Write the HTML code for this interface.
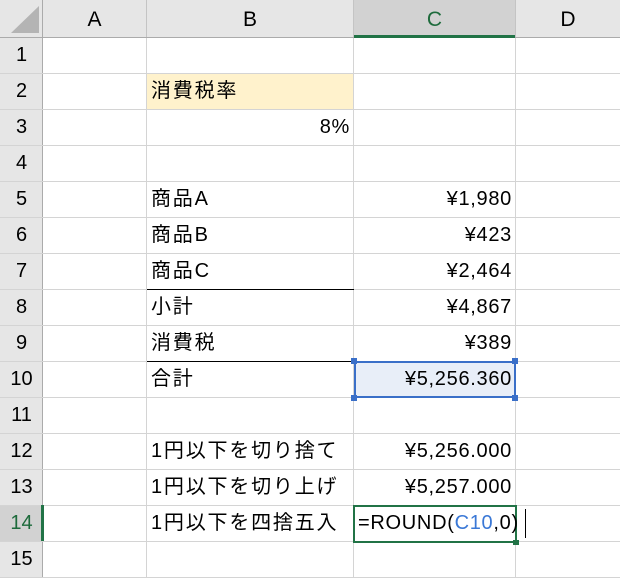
<!DOCTYPE html>
<html><head><meta charset="utf-8"><style>
*{margin:0;padding:0;box-sizing:border-box}
body{width:620px;height:578px;overflow:hidden;background:#fff;position:relative;font-family:"Liberation Sans","Noto Sans CJK JP",sans-serif;font-size:20px;color:#000}
.a{position:absolute}
.h{background:#e6e6e6}
.vl{position:absolute;top:0;width:1px;height:578px;background:#d4d4d4}
.hl{position:absolute;left:0;height:1px;width:620px;background:#d4d4d4}
.c{position:absolute;height:36px;line-height:37px;white-space:nowrap;letter-spacing:0.7px}
.j{letter-spacing:1.8px}
.r{text-align:right}
.rh{position:absolute;left:0;width:43px;height:36px;line-height:37px;text-align:center;font-size:20px}
.ch{position:absolute;top:0;height:37px;line-height:39px;text-align:center;font-size:21px}
</style></head><body>
<div class="a h" style="left:0;top:0;width:620px;height:37px"></div>
<div class="a h" style="left:0;top:0;width:43px;height:578px"></div>
<div class="a" style="left:354px;top:0;width:161px;height:37px;background:#d2d2d2"></div>
<div class="a" style="left:0;top:505px;width:43px;height:36px;background:#d2d2d2"></div>
<div class="a" style="left:147px;top:74px;width:207px;height:35px;background:#fff2cc"></div>
<div class="a" style="left:354px;top:361px;width:162px;height:36px;background:#e8eef8"></div>
<div class="vl" style="left:42px;background:#ababab"></div>
<div class="vl" style="left:146px"></div>
<div class="vl" style="left:353px"></div>
<div class="vl" style="left:515px"></div>
<div class="a" style="left:146px;top:0;width:1px;height:37px;background:#c4c4c4"></div>
<div class="a" style="left:353px;top:0;width:1px;height:37px;background:#c4c4c4"></div>
<div class="a" style="left:515px;top:0;width:1px;height:37px;background:#c4c4c4"></div>
<div class="hl" style="top:73px"></div><div class="hl" style="top:109px"></div><div class="hl" style="top:145px"></div>
<div class="hl" style="top:181px"></div><div class="hl" style="top:217px"></div><div class="hl" style="top:253px"></div>
<div class="hl" style="top:289px"></div><div class="hl" style="top:325px"></div><div class="hl" style="top:361px"></div>
<div class="hl" style="top:397px"></div><div class="hl" style="top:433px"></div><div class="hl" style="top:469px"></div>
<div class="hl" style="top:505px"></div><div class="hl" style="top:541px"></div><div class="hl" style="top:577px"></div>
<div class="a" style="left:0;top:37px;width:620px;height:1px;background:#ababab"></div>
<div class="a" style="left:354px;top:35px;width:161px;height:3px;background:#217346"></div>
<div class="a" style="left:41px;top:505px;width:3px;height:36px;background:#217346"></div>
<div class="a" style="left:147px;top:289px;width:207px;height:1px;background:#000"></div>
<div class="a" style="left:147px;top:361px;width:207px;height:1px;background:#000"></div>
<svg class="a" style="left:10px;top:6px" width="30" height="28"><polygon points="29,0 29,27 1,27" fill="#b4b4b4"/></svg>
<div class="ch" style="left:43px;width:103px">A</div>
<div class="ch" style="left:147px;width:206px">B</div>
<div class="ch" style="left:354px;width:161px;color:#1e6b3c">C</div>
<div class="ch" style="left:516px;width:104px">D</div>
<div class="rh" style="top:37px">1</div><div class="rh" style="top:73px">2</div><div class="rh" style="top:109px">3</div>
<div class="rh" style="top:145px">4</div><div class="rh" style="top:181px">5</div><div class="rh" style="top:217px">6</div>
<div class="rh" style="top:253px">7</div><div class="rh" style="top:289px">8</div><div class="rh" style="top:325px">9</div>
<div class="rh" style="top:361px">10</div><div class="rh" style="top:397px">11</div><div class="rh" style="top:433px">12</div>
<div class="rh" style="top:469px">13</div><div class="rh" style="top:505px;color:#1e6b3c">14</div><div class="rh" style="top:541px">15</div>
<div class="c j" style="left:151px;top:73px">消費税率</div>
<div class="c r" style="left:147px;width:203px;top:109px">8%</div>
<div class="c j" style="left:151px;top:181px">商品A</div><div class="c r" style="left:354px;width:158px;top:181px">¥1,980</div>
<div class="c j" style="left:151px;top:217px">商品B</div><div class="c r" style="left:354px;width:158px;top:217px">¥423</div>
<div class="c j" style="left:151px;top:253px">商品C</div><div class="c r" style="left:354px;width:158px;top:253px">¥2,464</div>
<div class="c j" style="left:151px;top:289px">小計</div><div class="c r" style="left:354px;width:158px;top:289px">¥4,867</div>
<div class="c j" style="left:151px;top:325px">消費税</div><div class="c r" style="left:354px;width:158px;top:325px">¥389</div>
<div class="c j" style="left:151px;top:361px">合計</div><div class="c r" style="left:354px;width:158px;top:361px">¥5,256.360</div>
<div class="c j" style="left:151px;top:433px">1円以下を切り捨て</div><div class="c r" style="left:354px;width:158px;top:433px">¥5,256.000</div>
<div class="c j" style="left:151px;top:469px">1円以下を切り上げ</div><div class="c r" style="left:354px;width:158px;top:469px">¥5,257.000</div>
<div class="c j" style="left:151px;top:505px">1円以下を四捨五入</div>
<div class="a" style="left:353px;top:505px;width:164px;height:38px;border:2px solid #217346"></div>
<div class="a" style="left:513px;top:540px;width:6px;height:5px;background:#217346"></div>
<div class="c" style="left:358px;top:505px">=ROUND(<span style="color:#3a78d6">C10</span>,0)</div>
<div class="a" style="left:354px;top:361px;width:162px;height:37px;border:2px solid #3a6fc8"></div>
<div class="a" style="left:351px;top:358px;width:6px;height:6px;background:#3a6fc8"></div>
<div class="a" style="left:512px;top:358px;width:6px;height:6px;background:#3a6fc8"></div>
<div class="a" style="left:351px;top:395px;width:6px;height:6px;background:#3a6fc8"></div>
<div class="a" style="left:512px;top:395px;width:6px;height:6px;background:#3a6fc8"></div>
<div class="a" style="left:525px;top:509px;width:1px;height:29px;background:#000"></div>
</body></html>
